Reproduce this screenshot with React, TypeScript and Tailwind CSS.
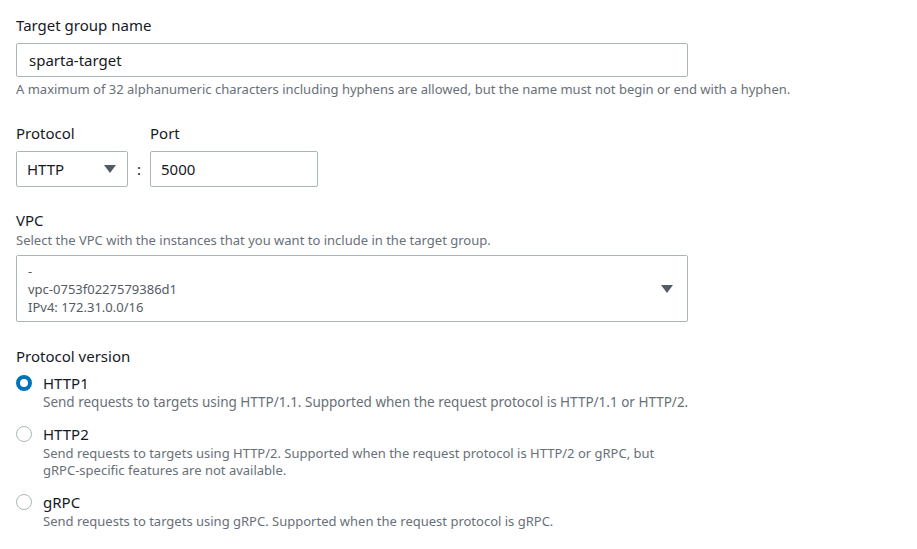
import React from 'react';

const font = { fontFamily: '"Noto Sans", "Open Sans", Arial, sans-serif' };

const Caret = () => (
  <svg width="12" height="10" viewBox="0 0 12 10" className="shrink-0">
    <path d="M0 1h12L6 9z" fill="#545b64" />
  </svg>
);

interface RadioProps {
  label: string;
  desc: string[];
  checked?: boolean;
  small?: boolean;
}

const Radio: React.FC<RadioProps> = ({ label, desc, checked, small }) => (
  <div className="flex gap-[11px]">
    <div className="pt-[3px]">
      {checked ? (
        <span className="block w-[16px] h-[16px] rounded-full border-[4.5px] border-[#0073bb] bg-white" />
      ) : (
        <span className="block w-[16px] h-[16px] rounded-full border-[1.5px] border-[#aab7b8] bg-white" />
      )}
    </div>
    <div>
      <div className="text-[15px] leading-[22px] text-[#16191f]">{label}</div>
      {desc.map(line => (
        <div
          key={line}
          className={small ? 'text-[13px] leading-[17px] text-[#687078]' : 'text-[13.5px] leading-[17px] text-[#687078]'}
        >
          {line}
        </div>
      ))}
    </div>
  </div>
);

export default function App() {
  return (
    <div style={font} className="bg-white w-[917px] h-[549px] px-4 pt-[14px] text-[#16191f]">
      {/* Name */}
      <div className="text-[15px] leading-[22px]">Target group name</div>
      <div className="mt-[7px] w-[672px] h-[34px] border border-[#aab7b8] rounded-[2px] flex items-center px-3 text-[15px]">
        sparta-target
      </div>
      <div className="mt-[3px] text-[13px] leading-[18px] text-[#687078]">
        A maximum of 32 alphanumeric characters including hyphens are allowed, but the name must not begin or end with a hyphen.
      </div>

      {/* Protocol / Port */}
      <div className="mt-[24px] flex items-start">
        <div>
          <div className="text-[15px] leading-[22px]">Protocol</div>
          <div className="mt-[7px] w-[112px] h-[36px] border border-[#aab7b8] rounded-[2px] flex items-center justify-between pl-[10px] pr-[11px] text-[15px]">
            HTTP
            <Caret />
          </div>
        </div>
        <div className="w-[22px] pt-[29px] h-[65px] flex items-center justify-center text-[15px]">:</div>
        <div>
          <div className="text-[15px] leading-[22px]">Port</div>
          <div className="mt-[7px] w-[168px] h-[36px] border border-[#aab7b8] rounded-[2px] flex items-center px-[10px] text-[15px]">
            5000
          </div>
        </div>
      </div>

      {/* VPC */}
      <div className="mt-[22px] text-[15px] leading-[22px]">VPC</div>
      <div className="text-[13px] leading-[18px] text-[#687078]">
        Select the VPC with the instances that you want to include in the target group.
      </div>
      <div className="mt-[6px] w-[672px] h-[67px] border border-[#aab7b8] rounded-[2px] flex items-center justify-between pl-[11px] pr-[14px]">
        <div className="text-[13px] leading-[18px] text-[#545b64]">
          <div>-</div>
          <div>vpc-0753f0227579386d1</div>
          <div>IPv4: 172.31.0.0/16</div>
        </div>
        <Caret />
      </div>

      {/* Protocol version */}
      <div className="mt-[23px] text-[15px] leading-[22px]">Protocol version</div>
      <div className="mt-[5px] flex flex-col gap-[12px]">
        <Radio
          checked
          label="HTTP1"
          desc={['Send requests to targets using HTTP/1.1. Supported when the request protocol is HTTP/1.1 or HTTP/2.']}
        />
        <Radio
          small
          label="HTTP2"
          desc={[
            'Send requests to targets using HTTP/2. Supported when the request protocol is HTTP/2 or gRPC, but',
            'gRPC-specific features are not available.',
          ]}
        />
        <Radio
          small
          label="gRPC"
          desc={['Send requests to targets using gRPC. Supported when the request protocol is gRPC.']}
        />
      </div>
    </div>
  );
}
